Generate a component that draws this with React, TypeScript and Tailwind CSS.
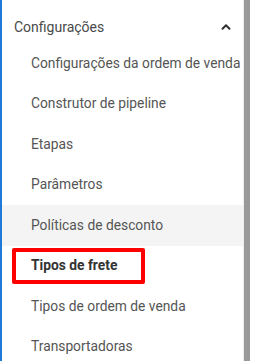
import { ChevronUp } from "lucide-react";

const items = [
  "Configurações da ordem de venda",
  "Construtor de pipeline",
  "Etapas",
  "Parâmetros",
  "Políticas de desconto",
  "Tipos de frete",
  "Tipos de ordem de venda",
  "Transportadoras",
];

export default function App() {
  return (
    <div
      className="h-[361px] w-[254px] overflow-hidden bg-white flex"
      style={{ fontFamily: "Roboto, 'Liberation Sans', sans-serif" }}
    >
      <div className="w-[2px] bg-[#1e7ad8] shrink-0" />
      <div className="flex-1 flex flex-col">
        <div className="h-[43px] shrink-0 pt-[11px] flex items-center justify-between pl-[12px] pr-[10px]">
          <span className="text-[14px] text-[#4a4a4a]">Configurações</span>
          <ChevronUp className="w-[14px] h-[14px] text-[#333]" strokeWidth={3.5} />
        </div>
        {items.map((label) => {
          const hovered = label === "Políticas de desconto";
          const active = label === "Tipos de frete";
          return (
            <div
              key={label}
              className={
                "relative h-[40.5px] shrink-0 flex items-center pl-[29px] text-[13.8px] " +
                (hovered ? "bg-[#f4f4f4] " : "") +
                (active ? "font-bold text-[#333]" : "text-[#555]")
              }
            >
              {active && (
                <div className="absolute left-[10px] top-[2px] w-[133px] h-[36px] border-[4px] border-[#ff0000] rounded-[2px]" />
              )}
              <span className="whitespace-nowrap">{label}</span>
            </div>
          );
        })}
      </div>
      <div className="w-[11px] shrink-0 flex">
        <div className="w-[1px] bg-[#eeeeee]" />
        <div className="w-[6px] bg-[#9a9a9a]" />
        <div className="flex-1 bg-white" />
      </div>
    </div>
  );
}
